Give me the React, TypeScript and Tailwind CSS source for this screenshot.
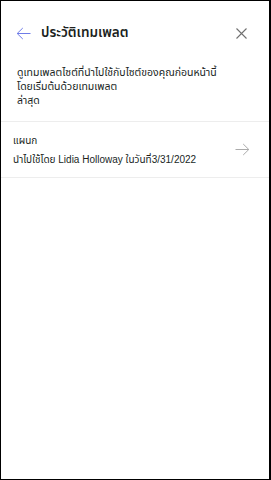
import React from "react";

const BackArrow = () => (
  <svg width="15" height="13" viewBox="0 0 15 13" fill="none">
    <path d="M14.5 6.5H1.2M6.8 1L1.2 6.5l5.6 5.5" stroke="#6f7ce8" strokeWidth="1" />
  </svg>
);

const CloseIcon = () => (
  <svg width="11" height="11" viewBox="0 0 11 11" fill="none">
    <path d="M0.5 0.5l10 10M10.5 0.5l-10 10" stroke="#707070" strokeWidth="1.1" />
  </svg>
);

const NextArrow = () => (
  <svg width="15" height="13" viewBox="0 0 15 13" fill="none">
    <path d="M0.5 6.5h13.3M8.2 1l5.6 5.5-5.6 5.5" stroke="#ababab" strokeWidth="1" />
  </svg>
);

const App: React.FC = () => {
  return (
    <div
      className="w-[271px] h-[480px] bg-white border border-black border-r-2 flex flex-col text-[#201f1e]"
      style={{ fontFamily: '"Liberation Sans", "Noto Sans Thai", Tahoma, sans-serif' }}
    >
      {/* Header */}
      <div className="flex items-center h-[38px] mt-[13px] pl-[15px] pr-[22px]">
        <BackArrow />
        <h1 className="ml-[10px] text-[13.5px] font-semibold leading-none whitespace-nowrap">ประวัติเทมเพลต</h1>
        <div className="ml-auto">
          <CloseIcon />
        </div>
      </div>

      {/* Description */}
      <p className="pl-[16px] pt-[13px] pb-[14px] text-[10.5px] leading-[14px] whitespace-nowrap">
        ดูเทมเพลตไซต์ที่นำไปใช้กับไซต์ของคุณก่อนหน้านี้
        <br />
        โดยเริ่มต้นด้วยเทมเพลต
        <br />
        ล่าสุด
      </p>

      {/* History item */}
      <div className="border-y border-[#ededed] flex items-center pl-[12px] pr-[19px] h-[57px]">
        <div className="flex flex-col gap-[5px] mt-[2px]">
          <span className="text-[10px] leading-[14px]">แผนก</span>
          <span className="text-[10px] leading-[14px] whitespace-nowrap">นำไปใช้โดย Lidia Holloway ในวันที่3/31/2022</span>
        </div>
        <div className="ml-auto">
          <NextArrow />
        </div>
      </div>
    </div>
  );
};

export default App;
